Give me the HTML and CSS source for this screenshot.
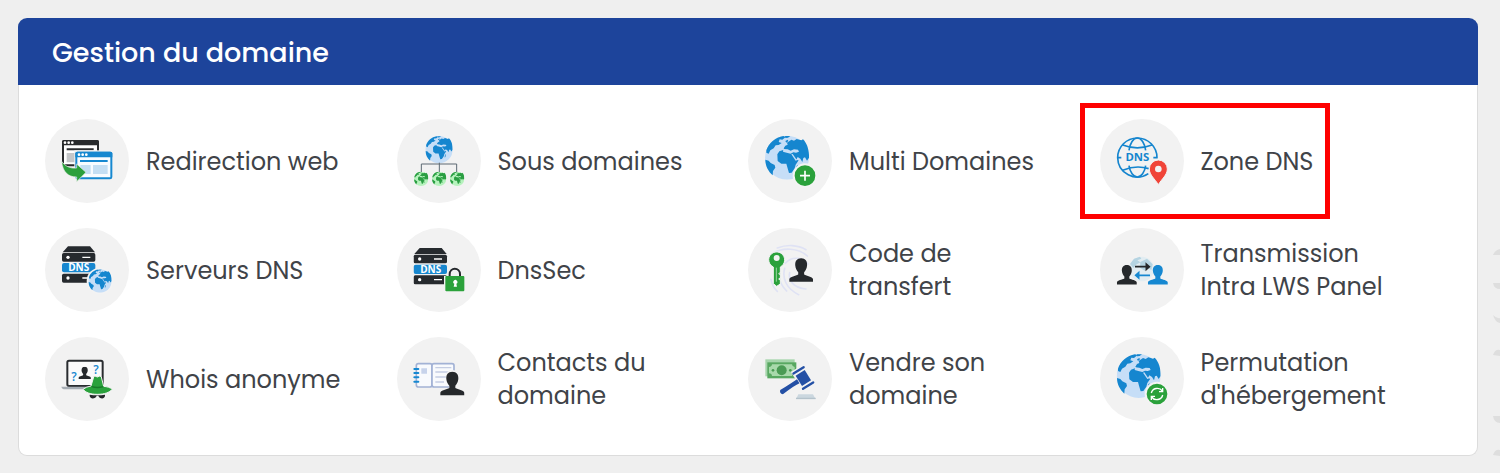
FILE: index.html
```html
<!DOCTYPE html>
<html lang="fr">
<head>
<meta charset="utf-8">
<meta name="viewport" content="width=device-width, initial-scale=1">
<title>Gestion du domaine</title>
<link rel="stylesheet" href="styles.css">
</head>
<body>
<svg class="defs" aria-hidden="true">
  <symbol id="globe" viewBox="75 77 132 132">
    <circle class="sea" cx="141" cy="143" r="66"/>
    <g fill="currentColor">
      <path d="M79 121C86 99 106 82 130 78l7 3-10 8-8-1-3 8 9 3-9 6-9 1-6 9-10 6-5 10-7-3z"/>
      <path d="M135 78l16 0-7 5-8 1zM136 93l7-4 2 4-6 5z"/>
      <path d="M76 149l10 3 6 7 12 6 2 8-7 10-1 13C85 184 76 168 76 149z"/>
      <path d="M131 115l5-8 7-3-2-6 13-9 8 3 8-5 14 4 5-3C201 99 208 121 207 143l-6 9-6-10-5 2-3 12-6-10-8-5-3 6-8 5-6-14-11-2-2-6 8-3-7-7-7 2z"/>
      <path d="M112 133l6-9 14-5 9 6 13 2 8 15 7 8 7 1-9 13-3 11-9 13-8 1-5-17-3-11-15 0-11-8z"/>
      <path d="M170 168l4-3-2 13-4 3z"/>
    </g>
    <path class="sea" d="M130 117l13 1 9 4 10-4 12 1 3 6-9 3-8-1-8 4-12-3-11-3z"/>
    <path class="sea" d="M154 133l4-1 13 19-4 1z"/>
  </symbol>
  <symbol id="server" viewBox="65 78 104 112">
    <path d="M84 79h66l15 18H68z" fill="#262a2e"/>
    <rect x="66" y="99" width="100" height="26" rx="5" fill="#262a2e"/>
    <rect x="66" y="161" width="100" height="27" rx="5" fill="#262a2e"/>
    <rect x="66" y="129" width="100" height="28" rx="6" fill="#1787cf"/>
    <path d="M127 112h24M127 174h24" stroke="#fff" stroke-width="4"/>
    <circle cx="84" cy="112" r="5" fill="#fff"/><circle cx="84" cy="174" r="5" fill="#fff"/>
  </symbol>
  <symbol id="person" viewBox="0 0 74 74">
    <path d="M37 1c13 0 19 9 18 22-1 10-5 16-9 20v7c8 5 25 6 27 14v8H1v-8c2-8 19-9 27-14v-7c-4-4-8-10-9-20C18 10 24 1 37 1z" fill="currentColor"/>
  </symbol>
</svg>

<svg class="backdrop" viewBox="0 0 8 216" aria-hidden="true">
  <path d="M1 8q2-5 7-6v6zM1 36h7v6q-6 0-7-6zM1 68q4 4 7 3v5q-5-1-7-8zM1 108q2-6 7-5v6zM1 169h7v7q-6 0-7-7zM1 208q2-6 7-5v6z"/>
</svg>

<main class="panel">
  <h1 class="panel-title">Gestion du domaine</h1>
  <ul class="tools">
    <li><a class="tool" href="#redirection">
      <svg class="icon" viewBox="15 27 252 252" aria-hidden="true">
        <rect x="69" y="93" width="105" height="73" rx="4" fill="#fff" stroke="#292b2d" stroke-width="6"/>
        <path d="M66 106V95q0-5 5-5h101q5 0 5 5v11z" fill="#292b2d"/>
        <path d="M80 118h81" stroke="#292b2d" stroke-width="6"/>
        <path d="M80 129h27v28H80z" fill="#c5c7c9"/>
        <rect x="103" y="121" width="118" height="90" fill="#f2f2f2"/>
        <rect x="109" y="128" width="105" height="77" rx="4" fill="#f8fcff" stroke="#1688d0" stroke-width="6"/>
        <path d="M106 142v-12q0-5 5-5h101q5 0 5 5v12z" fill="#1688d0"/>
        <path d="M120 153h83" stroke="#1688d0" stroke-width="6"/>
        <path d="M121 165h31v27h-31zM159 165h44v27h-44z" fill="#c5dff3"/>
        <g fill="#fff"><circle cx="75" cy="98" r="4"/><circle cx="86" cy="98" r="4"/><circle cx="97" cy="98" r="4"/><circle cx="117" cy="134" r="4"/><circle cx="128" cy="134" r="4"/><circle cx="139" cy="134" r="4"/></g>
        <path d="M65 154c10 14 24 22 45 20v-12l28 25-28 28v-14c-26 0-42-15-45-47z" fill="#2b9f3c" stroke="#f2f2f2" stroke-width="2"/>
      </svg>
      <span class="label">Redirection web</span></a></li>
    <li><a class="tool" href="#sous-domaines">
      <svg class="icon" viewBox="20 27 252 252" aria-hidden="true">
        <use href="#globe" class="blue" x="105" y="78" width="82" height="82"/>
        <path d="M147 158v30M93 188v-26h106v26" fill="none" stroke="#5c6973" stroke-width="3"/>
        <use href="#globe" class="green" x="71" y="185" width="43" height="43"/>
        <use href="#globe" class="green" x="125" y="185" width="43" height="43"/>
        <use href="#globe" class="green" x="179" y="185" width="43" height="43"/>
      </svg>
      <span class="label">Sous domaines</span></a></li>
    <li><a class="tool" href="#multi-domaines">
      <svg class="icon" viewBox="24 27 252 252" aria-hidden="true">
        <use href="#globe" class="blue" x="75" y="77" width="132" height="132"/>
        <circle cx="195" cy="197" r="34" fill="#2aa13b" stroke="#f3f3f3" stroke-width="6"/>
        <path d="M195 182v30M180 197h30" stroke="#fff" stroke-width="5"/>
      </svg>
      <span class="label">Multi Domaines</span></a></li>
    <li><a class="tool tool-marked" href="#zone-dns">
      <svg class="icon" viewBox="75 72 252 252" aria-hidden="true">
        <g fill="none" stroke="#1585ce" stroke-width="5">
          <path d="M126 188h13M235 188h13M128 188a59 59 0 0 1 118 0M128 188a59 59 0 0 0 92 48"/>
          <path d="M162 166c3-22 13-37 25-37s22 15 25 37M162 212c3 20 13 34 25 34s22-14 25-34"/>
          <path d="M143 150q44 17 88 0M143 226q40-17 78-5"/>
        </g>
        <text class="dns" x="187" y="199" font-size="34" fill="#1585ce">DNS</text>
        <path d="M250 269c-10-17-27-29-27-47a27 27 0 0 1 54 0c0 18-17 30-27 47z" fill="#f04438" stroke="#f2f2f2" stroke-width="3"/>
        <circle cx="250" cy="222" r="10" fill="#f2f2f2"/>
      </svg>
      <span class="label">Zone DNS</span></a></li>
    <li><a class="tool" href="#serveurs-dns">
      <svg class="icon" viewBox="15 24 252 252" aria-hidden="true">
        <use href="#server" x="65" y="78" width="104" height="112"/>
        <text class="dns" x="116" y="154" font-size="30" fill="#fff">DNS</text>
        <circle cx="180" cy="183" r="40" fill="#f3f3f3"/>
        <use href="#globe" class="blue" x="145" y="148" width="70" height="70"/>
      </svg>
      <span class="label">Serveurs DNS</span></a></li>
    <li><a class="tool" href="#dnssec">
      <svg class="icon" viewBox="20 24 252 252" aria-hidden="true">
        <use href="#server" x="69" y="83" width="104" height="112"/>
        <text class="dns" x="121" y="159" font-size="30" fill="#fff">DNS</text>
        <path d="M161 168h13c-2-38 41-38 39 0h12v49h-64z" fill="#f2f2f2"/>
        <path d="M178 170v-7c0-22 31-22 31 0v7" fill="none" stroke="#25282c" stroke-width="6"/>
        <rect x="165" y="168" width="57" height="46" rx="3" fill="#2ba23b"/>
        <path d="M190 200l2-9a6 6 0 1 1 6 0l2 9z" fill="#fff"/>
      </svg>
      <span class="label">DnsSec</span></a></li>
    <li><a class="tool" href="#code-transfert">
      <svg class="icon" viewBox="24 24 252 252" aria-hidden="true">
        <g fill="none" stroke="#dfe2f4" stroke-width="5" stroke-linecap="round">
          <path d="M112 84c28-11 61-10 86 5M97 101c31-20 78-18 105 7M93 178c3 17 10 28 19 36M136 130c20-24 55-17 68 2M134 145c-8 29 4 60 42 79M149 158c-5 24 12 45 49 49M122 130c-12 24-7 58 18 83"/>
        </g>
        <path d="M86 118a24 24 0 1 1 35 23v51l-11 7-10-8v-50q-14-7-14-23z" fill="#2aa13c" stroke="#f2f2f2" stroke-width="3"/>
        <circle cx="110" cy="114" r="9" fill="#f3f3f3"/>
        <path d="M109 143v42" stroke="#9ad3a2" stroke-width="3"/><path d="M122 157l-6 4 6 4M122 173l-6 4 6 4" fill="none" stroke="#f2f2f2" stroke-width="3"/>
        <use href="#person" class="dark" x="147" y="114" width="73" height="73"/>
      </svg>
      <span class="label">Code de transfert</span></a></li>
    <li><a class="tool" href="#transmission">
      <svg class="icon" viewBox="30 24 252 252" aria-hidden="true">
        <circle cx="155" cy="147" r="37" fill="#e2edf2"/>
        <path d="M120 132l12-16 18-6 4 6-12 5 9 6-13 7-8 10zM151 126l20-10 17 17-4 17-12-7-8 9-14-9z" fill="#b5d4e2"/>
        <path d="M135 140h36M169 132l9 8-9 8z" fill="#25282b" stroke="#25282b" stroke-width="5"/>
        <path d="M180 166h-36M146 158l-9 8 9 8z" fill="#1688d1" stroke="#1688d1" stroke-width="5"/>
        <use href="#person" class="dark" x="80" y="134" width="61" height="61"/>
        <use href="#person" class="azure" x="173" y="134" width="61" height="61"/>
      </svg>
      <span class="label">Transmission Intra LWS Panel</span></a></li>
    <li><a class="tool" href="#whois">
      <svg class="icon" viewBox="15 351 252 252" aria-hidden="true">
        <rect x="82" y="422" width="106" height="76" rx="5" fill="#fafafa" stroke="#292c2f" stroke-width="6"/>
        <path d="M64 500h92v8H75q-9 0-11-8z" fill="#a6adb4"/>
        <use href="#person" class="dark" x="115" y="440" width="38" height="38"/>
        <text class="mark" x="102" y="483" font-size="36">?</text>
        <text class="mark" x="168" y="462" font-size="36">?</text>
        <path d="M153 498l8-27q2-6 11 0 9-6 12 0l7 28c10 1 19 3 26 9-9 9-22 15-45 15s-35-6-43-15q10-8 24-10z" fill="#2aa13c" stroke="#f3f3f3" stroke-width="3"/>
        <path d="M155 500q17 5 35 0" stroke="#187b29" stroke-width="4" fill="none"/>
        <path d="M149 524q23 4 46 0v4c-2 11-17 9-20-1h-5c-3 10-19 12-21 1z" fill="#25282b"/>
      </svg>
      <span class="label">Whois anonyme</span></a></li>
    <li><a class="tool" href="#contacts">
      <svg class="icon" viewBox="20 351 252 252" aria-hidden="true">
        <g fill="#f8fafd" stroke="#a2b2d5" stroke-width="5">
          <rect x="78" y="431" width="47" height="70" rx="6"/><rect x="125" y="431" width="66" height="70" rx="6"/>
        </g>
        <path d="M93 445h17v16H93z" fill="#c7d3eb"/>
        <path d="M135 443h48M135 456h48M135 471h38M135 486h26" stroke="#c4cde3" stroke-width="4"/>
        <path d="M72 447h12M72 459h12M72 472h12M72 485h12" stroke="#1688d1" stroke-width="6" stroke-linecap="round"/>
        <use href="#person" x="146" y="449" width="80" height="80" color="#f2f2f2"/>
        <use href="#person" class="dark" x="149" y="454" width="74" height="74"/>
      </svg>
      <span class="label">Contacts du domaine</span></a></li>
    <li><a class="tool" href="#vendre">
      <svg class="icon" viewBox="24 351 252 252" aria-hidden="true">
        <rect x="76" y="418" width="88" height="51" fill="#a6d5ac"/>
        <rect x="82" y="427" width="87" height="48" fill="#58a861"/>
        <path d="M96 433h60q0 7 8 8v19q-8 1-8 8H96q0-7-9-8v-19q9-1 9-8z" fill="#a8d9ab"/>
        <circle cx="125" cy="451" r="15" fill="#4a9b54"/><circle cx="99" cy="451" r="4" fill="#4a9b54"/><circle cx="151" cy="451" r="4" fill="#4a9b54"/>
        <g transform="translate(190 474) rotate(-32)">
          <path d="M-22-35h44v70h-44z" fill="#f2f2f2"/>
          <path d="M-78-6q41 0 60-1V7q-19-3-60 2-8-8 0-15z" fill="#2450a5"/>
          <path d="M-16-18h32v36h-32z" fill="#2450a5"/>
          <path d="M-18-27h36M-18 27h36" stroke="#2450a5" stroke-width="7" stroke-linecap="round"/>
        </g>
        <path d="M175 523h44l8 15h-59z" fill="#cbd7df"/><path d="M168 535h59" stroke="#b4c2cb" stroke-width="4"/>
      </svg>
      <span class="label">Vendre son domaine</span></a></li>
    <li><a class="tool" href="#permutation">
      <svg class="icon" viewBox="30 351 252 252" aria-hidden="true">
        <use href="#globe" class="blue" x="80" y="402" width="132" height="132"/>
        <circle cx="201" cy="522" r="34" fill="#2aa13b" stroke="#f3f3f3" stroke-width="6"/>
        <path d="M184 519c3-15 24-19 33-6M218 525c-3 15-24 19-33 6M218 504v11h-11M184 540v-11h11" fill="none" stroke="#fff" stroke-width="4"/>
      </svg>
      <span class="label">Permutation d'hébergement</span></a></li>
  </ul>
</main>
</body>
</html>
```
FILE: styles.css
```css
*, *::before, *::after { box-sizing: border-box; }
body {
  margin: 0;
  padding: 18px 22px 18px 18px;
  background: #efefef;
  color: #404348;
  font-family: Poppins, Inter, "Open Sans", sans-serif;
}
.defs { position: absolute; width: 0; height: 0; }
.backdrop { position: absolute; top: 247px; right: 0; width: 8px; height: 216px; fill: #dedede; }
.panel {
  background: #fff;
  border: 1px solid #dcdcdc;
  border-top: 0;
  border-radius: 9px;
}
.panel-title {
  margin: 0 -1px;
  padding: 18px 34px 15px;
  border-radius: 9px 9px 0 0;
  background: #1d449b;
  color: #fff;
  font-size: 27px;
  line-height: 34px;
  font-weight: 500;
}
.tools {
  display: grid;
  grid-template-columns: repeat(4, 1fr);
  row-gap: 25px;
  margin: 0;
  padding: 34px 26px;
  list-style: none;
}
.tool {
  position: relative;
  display: flex;
  align-items: center;
  gap: 17px;
  color: inherit;
  text-decoration: none;
}
.tool-marked::after {
  content: "";
  position: absolute;
  top: -16px;
  left: -20px;
  width: 250px;
  height: 116px;
  border: 5px solid #fe0000;
}
.icon { flex: none; width: 84px; height: 84px; border-radius: 50%; background: #f2f2f2; }
.label { max-width: 200px; font-size: 24px; line-height: 33px; }
.sea { fill: var(--sea); }
.blue { color: #1586cf; --sea: #c6def7; }
.green { color: #2a9e42; --sea: #b6f2bd; }
.dark { color: #25282b; }
.azure { color: #1688d1; }
.dns { font-family: "Open Sans", sans-serif; font-weight: 700; text-anchor: middle; }
.mark { font-family: "Open Sans", sans-serif; font-weight: 600; text-anchor: middle; fill: #1688d1; }
```
